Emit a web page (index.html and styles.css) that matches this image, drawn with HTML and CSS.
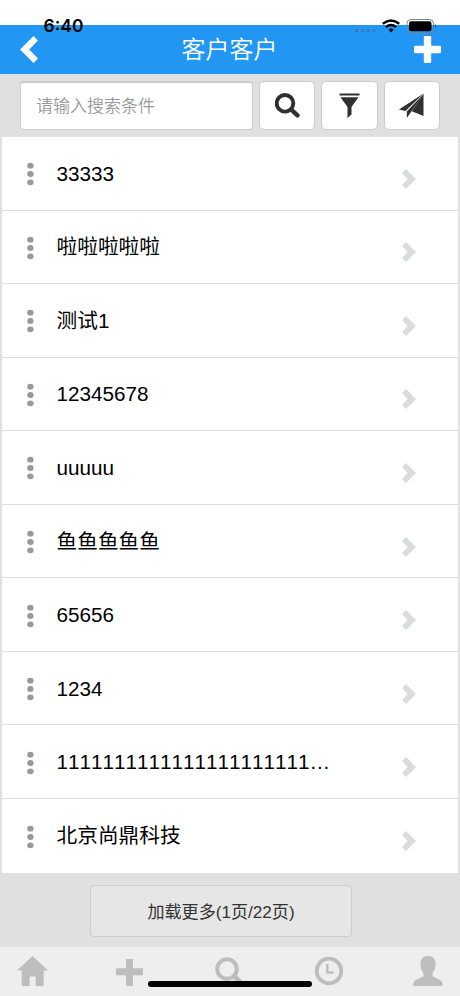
FILE: index.html
```html
<!DOCTYPE html>
<html lang="zh-CN">
<head>
<meta charset="utf-8">
<meta name="viewport" content="width=device-width">
<title>客户客户</title>
<link rel="stylesheet" href="styles.css">
</head>
<body>
<svg class="defs" aria-hidden="true">
<symbol id="chevron" viewBox="0 0 14 20"><path d="M0 4 4 0 14 10 4 20 0 16 5.500 10Z"/></symbol>
<symbol id="dots" viewBox="0 0 8 24"><ellipse cx="4.400" cy="3.700" rx="3.200" ry="2.900"/><ellipse cx="4.400" cy="12" rx="3.200" ry="2.900"/><ellipse cx="4.400" cy="20.300" rx="3.200" ry="2.900"/></symbol>
</svg>
<div class="app">
<div class="status">
<span class="time">6:40</span>
<svg class="status-icons" viewBox="0 0 84 18">
<g fill="#3979b5"><rect x="1" y="10" width="3" height="3.5" rx="1"/><rect x="7" y="10" width="3" height="3.5" rx="1"/><rect x="12.500" y="10" width="3" height="3.500" rx="1"/><rect x="18.500" y="10" width="3" height="3.500" rx="1"/></g>
<g fill="none" stroke="#000" stroke-width="2.400"><path d="M28.800 4.800Q37-1.800 45.200 4.800"/><path d="M31.800 8.100Q37 3.900 42.200 8.100"/></g>
<path d="M34.300 10.500Q37 8.700 39.700 10.500L37 13.600Z"/>
<rect x="53" y=".5" width="26.500" height="13.500" rx="4" fill="none" stroke="#758696" stroke-width="1"/>
<rect x="55" y="2.300" width="22.500" height="9.900" rx="2.300"/>
<path d="M81 5Q83 7.200 81 9.400Z" fill="#31536f"/>
</svg>
</div>
<header class="header">
<svg class="back" viewBox="0 0 18 27"><path d="M0 13.500 13.500 0 18 4.600 9.200 13.500 18 22.400 13.500 27Z"/></svg>
<h1 class="title">客户客户</h1>
<svg class="add" viewBox="0 0 27 27"><path d="M10.800 0h5.400q1 0 1 1v8.800H26q1 0 1 1v5.400q0 1-1 1h-8.800V26q0 1-1 1h-5.400q-1 0-1-1v-8.800H1q-1 0-1-1v-5.400q0-1 1-1h8.800V1q0-1 1-1Z"/></svg>
</header>
<div class="toolbar">
<input class="search" placeholder="请输入搜索条件" aria-label="搜索">
<button class="tool" aria-label="搜索"><svg viewBox="0 0 25 25"><circle cx="10" cy="10.300" r="8.300" fill="none" stroke="#303030" stroke-width="3.900"/><path d="m16.500 16.800 6 5.500" fill="none" stroke="#303030" stroke-width="4.400" stroke-linecap="round"/></svg></button>
<button class="tool" aria-label="筛选"><svg viewBox="0 0 25 25"><path d="M2.500.5h20v2h-20ZM3.500 4.200h18L14.500 14v7.500l-4 3.500V14Z"/></svg></button>
<button class="tool" aria-label="发送"><svg viewBox="0 0 25 25"><path d="M24.500.5 0 16.500 6.500 18Z"/><path d="M24 1.500 7.800 18.500V25l3.500-5Z"/><path d="M24.500.5V23l-11.700-4.700Z"/></svg></button>
</div>
<main class="list">
<div class="row"><svg class="dots"><use href="#dots"/></svg><span class="name">33333</span><svg class="go"><use href="#chevron"/></svg></div>
<div class="row"><svg class="dots"><use href="#dots"/></svg><span class="name">啦啦啦啦啦</span><svg class="go"><use href="#chevron"/></svg></div>
<div class="row"><svg class="dots"><use href="#dots"/></svg><span class="name">测试1</span><svg class="go"><use href="#chevron"/></svg></div>
<div class="row"><svg class="dots"><use href="#dots"/></svg><span class="name">12345678</span><svg class="go"><use href="#chevron"/></svg></div>
<div class="row"><svg class="dots"><use href="#dots"/></svg><span class="name">uuuuu</span><svg class="go"><use href="#chevron"/></svg></div>
<div class="row"><svg class="dots"><use href="#dots"/></svg><span class="name">鱼鱼鱼鱼鱼</span><svg class="go"><use href="#chevron"/></svg></div>
<div class="row"><svg class="dots"><use href="#dots"/></svg><span class="name">65656</span><svg class="go"><use href="#chevron"/></svg></div>
<div class="row"><svg class="dots"><use href="#dots"/></svg><span class="name">1234</span><svg class="go"><use href="#chevron"/></svg></div>
<div class="row"><svg class="dots"><use href="#dots"/></svg><span class="name">1111111111111111111111…</span><svg class="go"><use href="#chevron"/></svg></div>
<div class="row"><svg class="dots"><use href="#dots"/></svg><span class="name">北京尚鼎科技</span><svg class="go"><use href="#chevron"/></svg></div>
</main>
<div class="more"><button class="more-button">加载更多(1页/22页)</button></div>
<nav class="tabs">
<svg viewBox="0 0 32 32"><path d="M16.500 1 32 15.500H27.700V30q0 1-1 1h-7v-9.500h-6V31H6.700q-1 0-1-1V15.500H1Z"/></svg>
<svg viewBox="0 0 32 32"><path d="M12 4h5q1 0 1 1V13.300h9q1 0 1 1v5q0 1-1 1h-9v9.700q0 1-1 1h-5q-1 0-1-1V20.300H2q-1 0-1-1v-5q0-1 1-1h9V5q0-1 1-1Z"/></svg>
<svg viewBox="0 0 32 32"><circle cx="13" cy="14" r="9.800" fill="none" stroke="#bdbdbd" stroke-width="4"/><path d="m20.500 21.500 6 6" fill="none" stroke="#bdbdbd" stroke-width="5" stroke-linecap="round"/></svg>
<svg viewBox="0 0 32 32"><circle cx="16" cy="16" r="12.300" fill="none" stroke="#bdbdbd" stroke-width="3.800"/><path d="M14.300 9v8.500H20.500" fill="none" stroke="#bdbdbd" stroke-width="2.500"/></svg>
<svg viewBox="0 0 32 32"><path d="M16 1c5 0 7.500 3 7.500 8 0 4.500-1.300 7-3 9v3.200l8.200 4.300q2 1.200 2 4.500 0 1-1 1H2q-1 0-1-1 0-3.300 2-4.500l8.500-4.300V18c-1.700-2-3-4.500-3-9 0-5 2.500-8 7.500-8Z"/></svg>
</nav>
<div class="home-indicator"></div>
</div>
</body>
</html>
```

FILE: styles.css
```css
* { box-sizing: border-box; }
body { margin: 0; background: #fff; font-family: "Liberation Sans", "Noto Sans CJK SC", sans-serif; font-kerning: none; }
button, input { font-family: inherit; margin: 0; }
svg { display: block; flex: none; }
.defs { position: absolute; width: 0; height: 0; }
.app { position: relative; width: 460px; height: 996px; padding-top: 25px; display: flex; flex-direction: column; background: linear-gradient(#fff 25px, #e0e0e0 25px); overflow: hidden; }
.status { position: absolute; top: 15px; left: 43.500px; right: 22px; display: flex; justify-content: space-between; }
.time { font: 600 17.500px/21px Inter, sans-serif; }
.status-icons { width: 84px; height: 18px; margin: 3.500px 0 0; }
.header { height: 49px; flex: none; background: #2196f3; display: flex; align-items: center; justify-content: space-between; padding: 0 19px 0 20px; }
.header svg { fill: #fff; }
.back { width: 18px; height: 27px; }
.add { width: 27px; height: 27px; }
.title { margin: 0 0 0 7px; font-size: 24px; line-height: 34px; font-weight: 350; color: #fff; }
.toolbar { height: 63px; flex: none; display: flex; gap: 6px; padding: 7px 20px 7px; }
.search { width: 233px; height: 49px; border: 1px solid #ccc; border-top: 2px solid #c9c9c9; border-radius: 4px; padding: 1px 15px 0; font-size: 17px; font-weight: 350; background: #fff; outline: 0; }
.search::placeholder { color: #999; opacity: 1; }
.tool { width: 56.600px; height: 49px; padding: 0; border: 1px solid #ccc; border-radius: 5px; background: #fff; display: flex; align-items: center; justify-content: center; }
.tool svg { width: 25px; height: 25px; fill: #303030; }
.list { margin: 0 2px; height: 735.500px; flex: none; display: grid; grid-template-rows: repeat(10, 1fr); background: #fff; }
.row { display: flex; align-items: center; padding: 0 42px 0 24px; border-bottom: 1px solid #ddd; min-height: 0; }
.row:last-child { border-bottom: 0; }
.dots { width: 8px; height: 24px; fill: #999; margin-top: 2px; }
.name { flex: 1; margin: 1px 0 0 22.500px; font-size: 20.700px; line-height: 30px; color: #000; white-space: nowrap; }
.go { width: 14px; height: 20px; fill: #d8dcde; margin-top: 11px; }
.more { height: 74.500px; flex: none; display: flex; justify-content: center; padding: 12px 18px 0 0; }
.more-button { width: 262px; height: 52px; padding: 0; border: 1px solid #ccc; border-radius: 4px; background: #e6e6e6; color: #333; font-size: 17.100px; }
.tabs { flex: 1; background: #eee; display: flex; justify-content: space-between; padding: 8px 16px 0; }
.tabs svg { width: 32px; height: 32px; fill: #bdbdbd; }
.home-indicator { position: absolute; left: 148px; top: 981px; width: 164px; height: 6px; border-radius: 3px; background: #000; }
```
